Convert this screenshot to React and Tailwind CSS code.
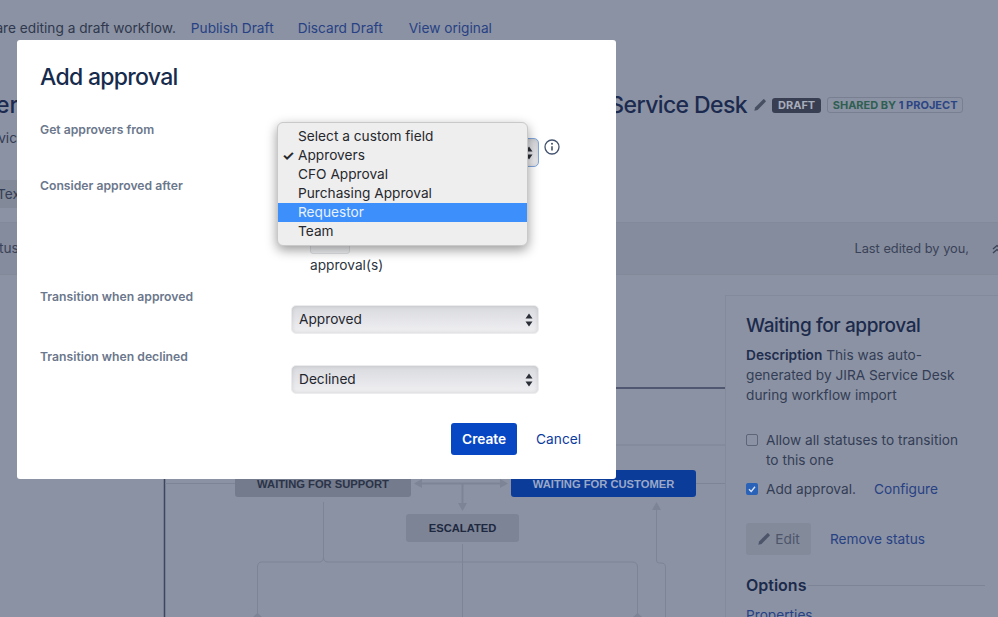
function Arrows() {
  return (
    <svg viewBox="0 0 8 14" className="h-[14px] w-[8px] shrink-0 text-[#2b2f38]" aria-hidden="true">
      <path fill="currentColor" d="M4 0.5 7.5 5.5H0.5ZM4 13.5 0.5 8.5H7.5Z" />
    </svg>
  )
}

function Pencil({ className }) {
  return (
    <svg viewBox="0 0 16 16" className={className} aria-hidden="true">
      <path fill="currentColor" d="M11.6 1.6a1 1 0 0 1 1.4 0l1.4 1.4a1 1 0 0 1 0 1.4L5.2 13.6 1.5 14.5l.9-3.7Z" />
    </svg>
  )
}

function FakeSelect({ label, focused }) {
  return (
    <div
      className={
        'flex h-[29px] w-[248px] items-center justify-between rounded-[5px] bg-linear-to-b from-[#d9dade] to-[#f0f0f3] pr-[5px] pl-[7px] text-[13.7px] text-[#23262e] shadow-[inset_0_0_4px_rgba(0,0,0,0.12)] ' +
        (focused ? 'border border-[#7fa6dc]' : 'border border-[#ececef]')
      }
    >
      <span>{label}</span>
      <Arrows />
    </div>
  )
}

function FormRow({ label, height, children }) {
  return (
    <div className="grid grid-cols-[251px_1fr]" style={{ height }}>
      <div className="text-[12.2px] leading-[16px] font-semibold text-[#6b778c]">{label}</div>
      <div>{children}</div>
    </div>
  )
}

function NativeMenu() {
  const items = ['Select a custom field', 'Approvers', 'CFO Approval', 'Purchasing Approval', 'Requestor', 'Team']
  return (
    <div className="absolute top-[82px] left-[260px] w-[251px] rounded-[6px] border border-[#c9c9c9] bg-[#eeeeee] py-[4px] text-[13.7px] leading-[19px] text-[#26282d] shadow-[0_4px_12px_rgba(0,0,0,0.4)]">
      {items.map((item) => (
        <div
          key={item}
          className={'relative h-[19px] pl-[20px] ' + (item === 'Requestor' ? 'bg-[#3d8ffb] text-[#e8f2ff]' : '')}
        >
          {item === 'Approvers' && <span className="absolute left-[4px] text-[14px] font-bold">✓</span>}
          {item}
        </div>
      ))}
    </div>
  )
}

function Modal() {
  return (
    <div className="absolute top-[40px] left-[17px] h-[439px] w-[599px] rounded-[3px] bg-white px-[23px] pt-[21px] font-['Inter',sans-serif]">
      <h2 className="h-[61px] text-[23px] leading-[32px] font-medium tracking-[-0.7px] text-[#172b4d]">Add approval</h2>
      <FormRow label="Get approvers from" height={56}>
        <div className="flex items-start gap-[5px] pt-[16px]">
          <FakeSelect label="Approvers" focused />
          <svg viewBox="0 0 16 16" className="mt-px h-4 w-4 text-[#42526e]" aria-hidden="true">
            <circle cx="8" cy="8" r="7" fill="none" stroke="currentColor" strokeWidth="1.3" />
            <circle cx="8" cy="4.8" r="1" fill="currentColor" />
            <path d="M8 7.2v4.4" stroke="currentColor" strokeWidth="1.6" />
          </svg>
        </div>
      </FormRow>
      <FormRow label="Consider approved after" height={111}>
        <div className="ml-[19px] pt-[46px]">
          <div className="h-[30px] w-[40px] rounded-[3px] border border-[#dfe1e6] bg-[#f4f5f7]" />
          <div className="mt-[1px] text-[13.7px] leading-[20px] text-[#2c3440]">approval(s)</div>
        </div>
      </FormRow>
      <FormRow label="Transition when approved" height={60}>
        <div className="pt-[16px]">
          <FakeSelect label="Approved" />
        </div>
      </FormRow>
      <FormRow label="Transition when declined" height={74}>
        <div className="pt-[16px]">
          <FakeSelect label="Declined" />
        </div>
      </FormRow>
      <div className="flex items-center justify-end pr-[12px]">
        <button type="button" className="h-[32px] w-[66px] rounded-[3px] bg-[#0747c4] text-[13.7px] font-semibold text-white">
          Create
        </button>
        <a className="ml-[19px] text-[13.7px] text-[#0c3b9e]">Cancel</a>
      </div>
      <NativeMenu />
    </div>
  )
}

function StatusNode({ className, children, style }) {
  return (
    <div
      className={"absolute flex items-center justify-center rounded-[3px] pt-px font-['Liberation_Sans',sans-serif] text-[11.2px] font-bold " + className}
      style={style}
    >
      {children}
    </div>
  )
}

function Diagram() {
  return (
    <div className="relative flex-1">
      <svg className="absolute top-0 left-0 h-[342px] w-[725px]" viewBox="0 0 725 342" fill="none" aria-hidden="true">
        <path d="M164.5 113H725M164.5 113V342" stroke="#3d4660" strokeWidth="1.5" />
        <path
          d="M165 208.5H235M696 208.5H725M616 170H725M323.5 227V282Q323.5 287 328 287H632Q637.5 287 637.5 292V342M323.5 282Q323.5 287 319 287H262Q257.5 287 257.5 292V342M462.5 269V342M656.5 234V285Q656.5 288 659 288H661Q665.5 288 665.5 292V342"
          stroke="#7c8496"
        />
        <path d="M419 208.5H503M462.5 209V229" stroke="#7c8496" strokeWidth="2" />
        <path
          d="M458 228H467L462.5 236ZM652 235H661L656.5 227ZM422 204V213L414 208.5ZM500 204V213L508 208.5ZM253 342L257.5 338 262 342ZM633 342L637.5 338 642 342Z"
          fill="#7c8496"
        />
      </svg>
      <StatusNode className="bg-[#747b8c] text-[#2a3348]" style={{ left: 235, top: 195, width: 176, height: 27 }}>
        WAITING FOR SUPPORT
      </StatusNode>
      <StatusNode className="bg-[#0c3c99] text-[#9ba8c8]" style={{ left: 511, top: 195, width: 185, height: 27 }}>
        WAITING FOR CUSTOMER
      </StatusNode>
      <StatusNode className="bg-[#7d8496] text-[#1e2940]" style={{ left: 406, top: 239, width: 113, height: 28 }}>
        ESCALATED
      </StatusNode>
    </div>
  )
}

function SidePanel() {
  return (
    <aside className="mt-[20px] w-[273px] border-t border-l border-[#838a9b] pt-[17px] pr-[13px] pl-[20px] text-[13.7px] leading-[20px] text-[#333d55]">
      <h3 className="text-[19px] leading-[26px] font-medium tracking-[-0.4px] text-[#1c2a4c]">Waiting for approval</h3>
      <p className="mt-[6px] w-[220px]">
        <span className="font-semibold text-[#1f2d4e]">Description</span> This was auto-generated by JIRA Service Desk during workflow import
      </p>
      <div className="mt-[25px] flex gap-[8px]">
        <span className="mt-[4px] h-[12px] w-[12px] shrink-0 rounded-[2px] border border-[#5d6578]" />
        <span className="w-[200px]">Allow all statuses to transition to this one</span>
      </div>
      <div className="mt-[9px] flex items-center gap-[8px]">
        <span className="flex h-[12px] w-[12px] items-center justify-center rounded-[2px] bg-[#2a62b8]">
          <svg viewBox="0 0 12 12" className="h-[12px] w-[12px]" aria-hidden="true">
            <path d="M3 6.2 5.2 8.4 9 3.8" fill="none" stroke="#d8e2f2" strokeWidth="1.4" />
          </svg>
        </span>
        <span>Add approval.</span>
        <a className="ml-[10px] text-[#274184]">Configure</a>
      </div>
      <div className="mt-[24px] flex items-center">
        <button type="button" className="flex h-[32px] w-[65px] items-center justify-center gap-[4px] rounded-[3px] bg-[#838a9a] text-[#4c556a]">
          <Pencil className="h-[14px] w-[14px]" />
          Edit
        </button>
        <a className="ml-[19px] text-[#274184]">Remove status</a>
      </div>
      <div className="mt-[20px] flex items-center gap-[2px]">
        <span className="text-[16px] leading-[20px] font-semibold text-[#1c2a4c]">Options</span>
        <span className="h-px flex-1 bg-[#7c8496]" />
      </div>
      <a className="mt-[10px] block text-[#274184]">Properties</a>
    </aside>
  )
}

export default function App() {
  return (
    <div className="relative h-[617px] w-[998px] overflow-hidden bg-[#8b92a3] font-['Inter',sans-serif]">
      <div className="ml-[-33px] flex h-[56px] items-center text-[13.7px] text-[#2f384e]">
        <span>You are editing a draft workflow.</span>
        <a className="ml-[15px] text-[#274184]">Publish Draft</a>
        <a className="ml-[24px] text-[#274184]">Discard Draft</a>
        <a className="ml-[26px] text-[#274184]">View original</a>
      </div>
      <div className="mt-[16px] flex h-[56px] items-center justify-between pt-[10px] pr-[35px] text-[23px] font-medium text-[#1b2a4e]">
        <span className="ml-[-4px]">er</span>
        <div className="flex items-center">
          <span className="tracking-[-0.6px]">Service Desk</span>
          <Pencil className="ml-[6px] h-[14px] w-[14px] text-[#474f62]" />
          <span className="ml-[5px] rounded-[3px] bg-[#383f53] px-[6px] text-[11px] leading-[15px] font-bold text-[#a8adba]">DRAFT</span>
          <span className="ml-[6px] rounded-[3px] border border-[#777f90] px-[4.5px] text-[11px] leading-[14px] font-bold text-[#2f5f52]">
            SHARED BY <span className="text-[#2b4585]">1 PROJECT</span>
          </span>
        </div>
      </div>
      <div className="ml-[-24px] h-[42px] text-[13.7px] leading-[20px] text-[#333d55]">Service</div>
      <div className="h-[52px] pt-[10px]">
        <span className="ml-[-3px] block h-[28px] w-[60px] rounded-[3px] bg-[#828998] text-[13.7px] leading-[28px] text-[#333d55]">Text</span>
      </div>
      <div className="flex h-[53px] items-center justify-between border-y border-[#828998] bg-[#858c9d] text-[12.8px] text-[#394258]">
        <span className="ml-[-22px] text-[13.7px]">Status</span>
        <div className="mr-[-4px] flex items-center">
          <span>Last edited by you,</span>
          <svg viewBox="0 0 10 10" className="ml-[23px] h-[10px] w-[10px] text-[#394258]" aria-hidden="true">
            <path d="M1 5 5 1.5 9 5M1 9 5 5.5 9 9" fill="none" stroke="currentColor" strokeWidth="1.3" />
          </svg>
        </div>
      </div>
      <div className="flex h-[342px]">
        <Diagram />
        <SidePanel />
      </div>
      <Modal />
    </div>
  )
}
